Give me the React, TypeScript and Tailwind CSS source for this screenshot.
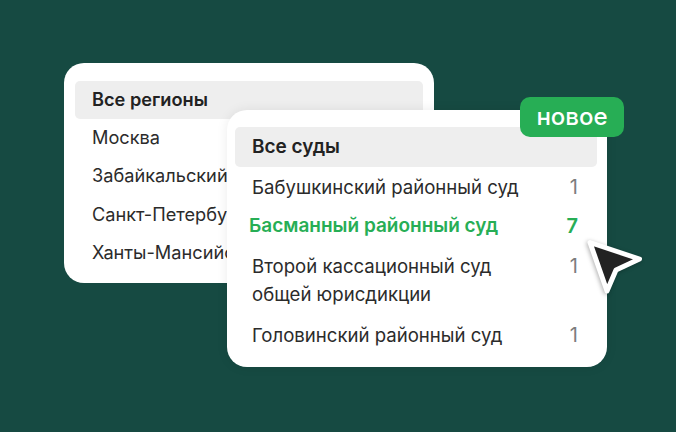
import React from "react";

const regions = ["Москва", "Забайкальский край", "Санкт-Петербург", "Ханты-Мансийский АО"];

function CourtRow({ name, count, active }: { name: React.ReactNode; count: number; active?: boolean }) {
  return (
    <div className={active ? "h-[39px] flex items-center justify-between pl-[14px] pr-[19px] text-[#27ae55] text-[19px] font-semibold" : "h-[39px] flex items-center justify-between pl-[17px] pr-[19px] text-[#2b2b2b]"}>
      <span>{name}</span>
      <span className={active ? "text-[20px]" : "text-[#7d7d7d] text-[20px]"}>{count}</span>
    </div>
  );
}

export default function App() {
  return (
    <div className="relative w-[676px] h-[432px] overflow-hidden bg-[#164a42] text-[18.6px] leading-[24px] font-['Inter','Noto_Sans',sans-serif]">
      <div className="absolute left-[64px] top-[63px] w-[370px] h-[220px] rounded-[20px] bg-white p-[11px] pt-[18px] text-[18.2px]">
        <div className="h-[38px] rounded-[5px] bg-[#eeeeee] px-[17px] pb-[2px] flex items-center font-semibold text-[#222222]">
          Все регионы
        </div>
        {regions.map((r) => (
          <div key={r} className="h-[38.3px] px-[17px] pb-[2px] flex items-center text-[#2b2b2b] whitespace-nowrap">
            {r}
          </div>
        ))}
      </div>

      <div className="absolute left-[227px] top-[110px] w-[380px] h-[257px] rounded-[20px] bg-white pl-[8px] pr-[10px] pt-[17px] shadow-[0_0_12px_rgba(0,0,0,0.08)]">
        <div className="h-[40px] rounded-[5px] bg-[#eeeeee] px-[17px] flex items-center font-semibold text-[#222222] text-[19px]">
          Все суды
        </div>
        <CourtRow name="Бабушкинский районный суд" count={1} />
        <CourtRow name="Басманный районный суд" count={7} active />
        <div className="h-[70px] flex items-center justify-between pl-[17px] pr-[19px] text-[#2b2b2b] leading-[28px]">
          <span>
            Второй кассационный суд
            <br />
            общей юрисдикции
          </span>
          <span className="text-[#7d7d7d] text-[20px] self-start mt-[7px]">1</span>
        </div>
        <CourtRow name="Головинский районный суд" count={1} />
      </div>

      <div className="absolute left-[520px] top-[97px] w-[104px] h-[40px] rounded-[10px] bg-[#27ae55] text-white text-[24px] font-medium flex items-center justify-center">
        новое
      </div>

      <svg className="absolute left-[580px] top-[232px]" width="70" height="70" viewBox="0 0 70 70">
        <path
          d="M10 10.5 L59.5 27 L36 38 L27 59 Z"
          fill="#222222"
          stroke="white"
          strokeWidth="5"
          strokeLinejoin="round"
          style={{ filter: "drop-shadow(-1px 1px 2px rgba(0,0,0,0.3))" }}
        />
      </svg>
    </div>
  );
}
